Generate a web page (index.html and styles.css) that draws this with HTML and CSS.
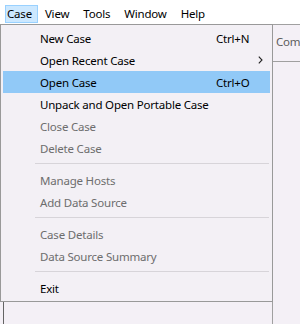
FILE: index.html
```html
<!DOCTYPE html>
<html>
    <head>
        <link rel="stylesheet" href="styles.css">
    </head>
    <body>
        <div id="titlestrip"></div>
        <div id="menubar">
            <span class="mbitem open">Case</span>
            <span class="mbitem">View</span>
            <span class="mbitem">Tools</span>
            <span class="mbitem">Window</span>
            <span class="mbitem">Help</span>
        </div>

        <div id="workspace">
            <div id="leftpane"></div>
            <div id="rightpane">
                <div class="panehead">Com</div>
            </div>
        </div>

        <!-- Case dropdown -->
        <div id="casemenu">
            <div class="mi"><span class="lbl">New Case</span><span class="key">Ctrl+N</span></div>
            <div class="mi"><span class="lbl">Open Recent Case</span><span class="key"><svg class="sub" width="5" height="8" viewBox="0 0 5 8"><path d="M0.8 0.6 L4 4 L0.8 7.4" fill="none" stroke="#222" stroke-width="1.1"/></svg></span></div>
            <div class="mi hot"><span class="lbl">Open Case</span><span class="key">Ctrl+O</span></div>
            <div class="mi"><span class="lbl">Unpack and Open Portable Case</span></div>
            <div class="mi off"><span class="lbl">Close Case</span></div>
            <div class="mi off"><span class="lbl">Delete Case</span></div>
            <div class="sep"></div>
            <div class="mi off"><span class="lbl">Manage Hosts</span></div>
            <div class="mi off"><span class="lbl">Add Data Source</span></div>
            <div class="sep"></div>
            <div class="mi off"><span class="lbl">Case Details</span></div>
            <div class="mi off"><span class="lbl">Data Source Summary</span></div>
            <div class="sep"></div>
            <div class="mi"><span class="lbl">Exit</span></div>
        </div>
    </body>
</html>
```

FILE: styles.css
```css
*{ padding: 0px; margin: 0px; box-sizing: border-box; }

html, body
{
    overflow: hidden;
    background: #f4f0f6;
    width: 100%;
    height: 100%;
    font-family: "Noto Sans", "Open Sans", sans-serif;
    font-size: 11.5px;
    letter-spacing: -0.2px;
    color: #000;
}

#titlestrip
{
    height: 5px;
    background: #fff;
}

#menubar
{
    display: flex;
    height: 19px;
    background: #fff;
    padding-left: 1px;
}

.mbitem
{
    display: block;
    height: 18px;
    line-height: 16px;
    padding: 0 6px;
    border: 1px solid transparent;
}
.mbitem.open
{
    background: #cce8ff;
    border-color: #99d1ff;
    margin-left: 4px;
    padding: 0 5px 0 1px;
}

#workspace
{
    display: flex;
    height: 300px;
    border-top: 1px solid #a0a0a0;
}

#leftpane
{
    width: 269px;
    margin-left: 3px;
    border-left: 1px solid #646464;
}

#rightpane
{
    flex: 1;
    border-left: 1px solid #a0a0a0;
    overflow: hidden;
}

.panehead
{
    height: 37px;
    line-height: 34px;
    padding-left: 3px;
    color: #5c5c5c;
    border-bottom: 1px solid #a0a0a0;
    white-space: nowrap;
}

/* popup menu */
#casemenu
{
    position: absolute;
    left: 0;
    top: 24px;
    width: 273px;
    padding: 2px;
    background: #f3f0f5;
    border: 1px solid #999;
}

.mi
{
    display: flex;
    align-items: center;
    height: 22px;
    padding-left: 37px;
    white-space: nowrap;
}
.mi .lbl{ flex: 1; }
.mi .key
{
    width: 54px;
    display: flex;
    align-items: center;
}
.mi.hot{ background: #91c9f7; }
.mi.off{ color: #6d6d6d; }

.sub{ margin-left: 42px; }

.sep
{
    height: 10px;
    margin: 0 1px 0 32px;
    padding-top: 4px;
}
.sep::before
{
    content: "";
    display: block;
    border-top: 1px solid #d7d4d9;
}
```
